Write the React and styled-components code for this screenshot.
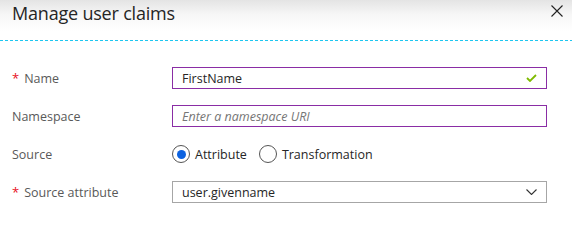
import React from "react"
import styled, { createGlobalStyle } from "styled-components"

const GlobalStyle = createGlobalStyle`
  html, body {
    margin: 0;
    padding: 0;
    background: #fff;
  }
  body {
    font-family: "Open Sans", "Noto Sans", sans-serif;
    color: #323130;
  }
`

const Panel = styled.div`
  width: 572px;
  height: 247px;
  background: #fff;
  overflow: hidden;
`

const Header = styled.div`
  height: 40px;
  display: flex;
  align-items: flex-start;
  justify-content: space-between;
  padding: 0 9px 0 12px;
  box-sizing: border-box;
  background: linear-gradient(to bottom, #e4e4e4 0px, #f6f6f6 14px, #ffffff 32px);
`

const Title = styled.h1`
  margin: 0;
  padding-top: 1px;
  font-size: 18px;
  font-weight: 400;
  line-height: 24px;
  color: #252525;
  letter-spacing: -0.2px;
`

const CloseButton = styled.button`
  border: 0;
  background: none;
  padding: 0;
  margin-top: 5px;
  width: 12px;
  height: 12px;
  cursor: pointer;
  & svg {
    display: block;
  }
`

const Divider = styled.div`
  height: 1px;
  background: repeating-linear-gradient(to right, #1ec6f0 0 3px, transparent 3px 5px);
`

const Form = styled.div`
  display: flex;
  flex-direction: column;
  padding: 26px 25px 0 12px;
  gap: 16px;
`

const Row = styled.div`
  display: grid;
  grid-template-columns: 160px 1fr;
  align-items: center;
  height: 22px;
`

const Label = styled.div`
  font-size: 12.5px;
  color: #595959;
  display: flex;
  align-items: center;
  gap: 5px;
`

const Required = styled.span`
  color: #e81123;
  font-size: 13px;
`

const Field = styled.div`
  height: 22px;
  box-sizing: border-box;
  border: 1px solid ${p => (p.$active ? "#8a2da5" : "#a6a6a6")};
  display: flex;
  align-items: center;
  padding: 0 9px;
  font-size: 12.5px;
  color: ${p => (p.$placeholder ? "#767676" : "#262626")};
  font-style: ${p => (p.$placeholder ? "italic" : "normal")};
  justify-content: space-between;
`

const Radios = styled.div`
  display: flex;
  align-items: center;
  gap: 12px;
  height: 22px;
`

const RadioOption = styled.label`
  display: flex;
  align-items: center;
  gap: 5px;
  font-size: 12.5px;
  color: #262626;
`

const RadioCircle = styled.span`
  width: 18px;
  height: 18px;
  box-sizing: border-box;
  border-radius: 50%;
  border: 1px solid #555;
  display: flex;
  align-items: center;
  justify-content: center;
  &::after {
    content: "";
    width: 9px;
    height: 9px;
    border-radius: 50%;
    background: ${p => (p.$checked ? "#0c62e0" : "transparent")};
  }
`

const Check = () => (
  <svg width="11" height="8" viewBox="0 0 11 8">
    <path d="M1 4 L4 7 L10 1" fill="none" stroke="#7fba00" strokeWidth="1.8" />
  </svg>
)

const Chevron = () => (
  <svg width="11" height="6" viewBox="0 0 11 6">
    <path d="M0.5 0.5 L5.5 5.5 L10.5 0.5" fill="none" stroke="#333" strokeWidth="1.1" />
  </svg>
)

export default function App() {
  return (
    <Panel>
      <GlobalStyle />
      <Header>
        <Title>Manage user claims</Title>
        <CloseButton aria-label="Close">
          <svg width="12" height="12" viewBox="0 0 12 12">
            <path d="M0.5 0.5 L11.5 11.5 M11.5 0.5 L0.5 11.5" stroke="#222" strokeWidth="1.1" />
          </svg>
        </CloseButton>
      </Header>
      <Divider />
      <Form>
        <Row>
          <Label><Required>*</Required>Name</Label>
          <Field $active>
            <span>FirstName</span>
            <Check />
          </Field>
        </Row>
        <Row>
          <Label>Namespace</Label>
          <Field $active $placeholder>Enter a namespace URI</Field>
        </Row>
        <Row>
          <Label>Source</Label>
          <Radios>
            <RadioOption><RadioCircle $checked />Attribute</RadioOption>
            <RadioOption><RadioCircle />Transformation</RadioOption>
          </Radios>
        </Row>
        <Row>
          <Label><Required>*</Required>Source attribute</Label>
          <Field>
            <span>user.givenname</span>
            <Chevron />
          </Field>
        </Row>
      </Form>
    </Panel>
  )
}
